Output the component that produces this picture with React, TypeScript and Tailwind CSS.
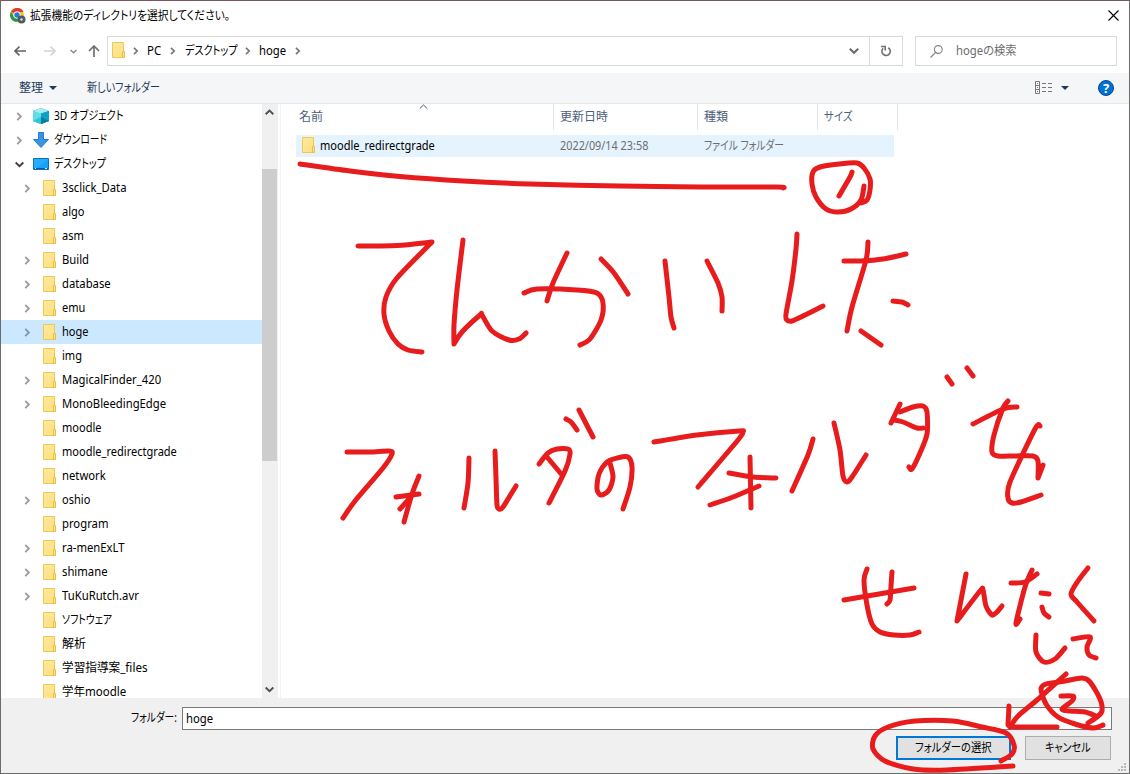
import type { ReactNode } from "react";

type Stroke = number[];

/* Freehand pen strokes as x,y pairs; a repeated point makes a sharp corner. */
const strokes: Stroke[] = [
  [300, 164, 350, 171, 400, 176.5, 463, 181, 530, 184, 620, 186, 700, 187, 777, 187, 783, 188],
  [358, 246, 397, 245.5, 432, 242, 432, 242, 397, 278, 386, 297, 384, 314, 389, 331, 398, 344, 408, 350, 422, 352],
  [463, 240, 457, 290, 454, 325, 454, 344, 454, 344, 462, 332, 480, 315, 482, 315, 492, 331, 509, 340, 519, 339, 526, 333],
  [524, 293, 537, 289, 577, 290, 597, 293, 603, 303, 601, 320, 590, 339, 580, 345],
  [567, 253, 553, 283, 547, 301],
  [601, 259, 614, 273, 628, 294],
  [665, 261, 669, 297, 671, 317, 674, 328],
  [707, 261, 718, 283, 722, 297, 722, 311],
  [797, 234, 796, 249, 792, 281, 786, 314, 787, 320, 792, 321, 801, 317, 823, 306],
  [844, 261, 861, 261, 883, 259, 906, 254],
  [868, 242, 866, 260, 852, 307, 847, 331],
  [893, 301, 902, 302, 908, 305],
  [861, 331, 881, 345],
  [861, 203, 867, 200, 870, 190, 870, 179, 864, 168, 857, 163, 839, 164, 820, 167, 813, 172, 812, 184, 816, 197, 826, 209, 838, 212, 851, 209, 861, 200, 864, 186],
  [852, 172, 850, 177, 839, 196],
  [347, 452, 370, 452, 389, 451, 392, 454, 383, 468, 355, 501, 343, 518],
  [396, 497, 419, 494],
  [419, 476, 412, 494, 404, 522],
  [410, 498, 400, 509],
  [469, 458, 468, 483, 464, 508],
  [495, 451, 496, 478, 497, 505, 499, 509, 503, 507, 516, 486],
  [539, 464, 548, 453, 557, 449, 568, 449, 570, 454, 565, 471, 549, 503],
  [547, 457, 562, 475],
  [566, 419, 571, 422, 577, 430],
  [579, 410, 593, 437],
  [610, 463, 613, 477, 609, 490, 601, 495, 597, 489, 599, 474, 607, 462, 617, 458, 628, 457, 632, 467, 630, 487, 623, 509],
  [654, 442, 697, 435, 739, 431, 743, 432, 738, 440, 698, 487],
  [729, 473, 753, 477, 776, 478],
  [750, 457, 751, 508],
  [759, 486, 733, 497, 710, 505],
  [813, 439, 808, 455, 792, 491],
  [834, 423, 840, 450, 843, 476, 847, 482, 852, 477, 866, 455],
  [900, 404, 891, 423],
  [894, 420, 903, 422, 917, 428, 923, 428],
  [900, 412, 913, 407, 923, 406, 927, 412, 927, 434, 920, 453, 912, 469, 909, 467],
  [947, 377, 952, 384],
  [967, 368, 973, 376],
  [973, 424, 1003, 409, 1017, 407],
  [1008, 401, 1003, 408, 994, 435, 992, 452, 998, 456, 1015, 456, 1033, 456, 1038, 461, 1038, 478, 1038, 478, 1043, 465],
  [1040, 426, 1035, 429, 1010, 482, 1008, 498, 1012, 503, 1021, 502, 1041, 495],
  [844, 600, 914, 588],
  [867, 569, 864, 580, 867, 605, 872, 624, 880, 632, 894, 635, 910, 635, 919, 632],
  [892, 572, 891, 586, 890, 600, 887, 604],
  [966, 574, 957, 621, 957, 621, 980, 591, 983, 590, 986, 606, 992, 615, 997, 612, 1002, 606],
  [1011, 583, 1025, 582, 1037, 574],
  [1032, 570, 1025, 587, 1016, 623, 1020, 619],
  [1041, 593, 1049, 594],
  [1042, 607, 1044, 613, 1049, 617],
  [1088, 568, 1078, 581, 1071, 594, 1077, 602, 1094, 621],
  [1036, 635, 1036, 652, 1044, 662, 1055, 659, 1065, 648],
  [1073, 639, 1090, 637, 1087, 647, 1089, 655, 1096, 658],
  [1066, 674, 1037, 700, 1018, 716, 1010, 727],
  [1009, 706, 1008, 725, 1008, 725, 1015, 727, 1057, 727],
  [1103, 725, 1093, 728, 1075, 724, 1058, 717, 1046, 704, 1041, 689, 1046, 684, 1065, 681, 1082, 678, 1090, 682, 1100, 699, 1102, 711, 1097, 717, 1088, 723],
  [1061, 696, 1073, 696, 1072, 701, 1062, 709, 1070, 711, 1085, 712, 1096, 716],
  [1001, 761, 1012, 754, 1014, 745, 1006, 733, 982, 727, 953, 721, 915, 721, 888, 727, 875, 736, 873, 749, 885, 761, 913, 769, 947, 770, 1013, 766],
];

function smooth(p: Stroke) {
  const n = p.length / 2;
  const at = (i: number) => {
    const k = Math.max(0, Math.min(n - 1, i));
    return [p[k * 2], p[k * 2 + 1]];
  };
  let d = `M${p[0]} ${p[1]}`;
  for (let i = 0; i < n - 1; i++) {
    const [a, b, c, e] = [at(i - 1), at(i), at(i + 1), at(i + 2)];
    if (b[0] === c[0] && b[1] === c[1]) continue;
    d += `C${b[0] + (c[0] - a[0]) / 7} ${b[1] + (c[1] - a[1]) / 7} ${c[0] - (e[0] - b[0]) / 7} ${c[1] - (e[1] - b[1]) / 7} ${c[0]} ${c[1]}`;
  }
  return d;
}

/* Narrow Japanese UI text */
function Jp({ children, scale = "scale-x-[0.84]" }: { children: ReactNode; scale?: string }) {
  return <span className={`inline-block origin-left whitespace-nowrap [font-feature-settings:'palt'] ${scale}`}>{children}</span>;
}

function Folder() {
  return (
    <svg width="14" height="16" viewBox="0 0 14 16" className="shrink-0">
      <defs>
        <linearGradient id="folder" x1="0" y1="0" x2="1" y2="1">
          <stop stopColor="#ffe9a2" />
          <stop offset="1" stopColor="#ffdf7d" />
        </linearGradient>
      </defs>
      <path d="M.5.5h11v15H.5z" fill="url(#folder)" stroke="#ecc94f" />
      <path d="M10.5 9.5h2v6h-2z" fill="#ffe38c" stroke="#e6bf43" />
    </svg>
  );
}

function Chevron({ dir = "right", color = "#8c8c8c", size = 8 }: { dir?: "right" | "down" | "up"; color?: string; size?: number }) {
  const d = { right: "M2 .8 5.2 4 2 7.2", down: "M.6 2.2 4 5.5 7.4 2.2", up: "M.6 5.6 4 2.3 7.4 5.6" }[dir];
  return (
    <svg width={size} height={size} viewBox="0 0 8 8" className="shrink-0" fill="none" stroke={color} strokeWidth="1.7">
      <path d={d} />
    </svg>
  );
}

function Cube() {
  return (
    <svg width="16" height="16" viewBox="0 0 16 16">
      <path d="M0 3 8 0l8 3v10l-8 3-8-3z" fill="#1298b8" />
      <path d="m0 3 8 2v11l-8-3z" fill="#5fdde6" />
      <path d="m0 3 8-3 8 3-8 2.5z" fill="#a5eef2" />
      <path d="m8 5.500 8-2.500v10l-8 3z" fill="#0ba3c4" />
      <path d="m0 13 8-4v7z" fill="#2cc4d5" />
      <path d="m16 13-8-4v7z" fill="#087d9c" />
    </svg>
  );
}

function DownArrow() {
  return (
    <svg width="16" height="16" viewBox="0 0 16 16">
      <path d="M5.500.500h5V7.500h5L8 15.500.5 7.500h5z" fill="#3994e5" stroke="#267ccc" />
    </svg>
  );
}

function Monitor() {
  return (
    <svg width="16" height="12" viewBox="0 0 16 12">
      <path d="M.5.5h15v11H.5z" fill="#17a2fa" stroke="#0873bd" />
      <path d="M1 1h14L3 10.500H1z" fill="#32b1ff" opacity=".7" />
      <path d="M1 10.500h14" stroke="#075a99" />
      <path d="M2 10.500h1m9 0h2" stroke="#d7efff" />
    </svg>
  );
}

type Row = { name: string; open?: boolean; jp?: string };
const rows: Row[] = [
  { name: "3sclick_Data", open: true },
  { name: "algo" },
  { name: "asm" },
  { name: "Build", open: true },
  { name: "database", open: true },
  { name: "emu", open: true },
  { name: "hoge", open: true },
  { name: "img" },
  { name: "MagicalFinder_420", open: true },
  { name: "MonoBleedingEdge", open: true },
  { name: "moodle" },
  { name: "moodle_redirectgrade" },
  { name: "network" },
  { name: "oshio", open: true },
  { name: "program" },
  { name: "ra-menExLT", open: true },
  { name: "shimane", open: true },
  { name: "TuKuRutch.avr", open: true },
  { name: "ソフトウェア", jp: "scale-x-[0.82]" },
  { name: "解析", jp: "scale-x-100" },
  { name: "学習指導案_files", jp: "scale-x-[0.97]" },
  { name: "学年moodle", jp: "scale-x-[0.96]" },
];

const latin = "scale-x-[0.92]";
const latinWide = "scale-x-[0.94]";
const wideNames = ["MagicalFinder_420", "MonoBleedingEdge", "3sclick_Data", "TuKuRutch.avr", "ra-menExLT", "database", "network", "shimane", "program", "Build"];

function RootRow({ icon, label, open, scale }: { icon: ReactNode; label: string; open?: boolean; scale: string }) {
  return (
    <div className="flex h-6 shrink-0 items-center pl-[14px]">
      <Chevron dir={open ? "down" : "right"} color={open ? "#404040" : "#a0a0a0"} size={9} />
      <div className="ml-[9px] flex w-4 justify-center">{icon}</div>
      <div className="ml-[5px]"><Jp scale={scale}>{label}</Jp></div>
    </div>
  );
}

export default function App() {
  return (
    <div className="relative flex h-[774px] w-[1130px] flex-col overflow-hidden border border-[#6b6b6b] border-t-[#79555d] bg-white font-['Noto_Sans','Noto_Sans_CJK_JP',sans-serif] text-[12px] leading-4 text-black">
      <header className="flex h-[29px] shrink-0 items-center pr-[10px] pl-[9px]">
        <svg width="16" height="16" viewBox="0 0 16 16">
          <circle cx="7" cy="7" r="7" fill="#f9c51d" />
          <path d="M7 7 1 3.500A7 7 0 0 1 13.500 4H7z" fill="#e23b2e" />
          <path d="M1 3.500A7 7 0 0 0 7 14l2-4-5-1z" fill="#279847" />
          <circle cx="7" cy="7" r="3.300" fill="#2977df" stroke="#fff" />
          <circle cx="11.500" cy="11.500" r="4" fill="#4c5a65" />
          <circle cx="11.500" cy="11.500" r="1.200" fill="#dfe5e9" />
        </svg>
        <div className="ml-[4px] grow"><Jp scale="scale-x-[0.895]">拡張機能のディレクトリを選択してください。</Jp></div>
        <svg width="11" height="11" viewBox="0 0 11 11" stroke="#000" strokeWidth="1.100"><path d="m.5.500 10 10m0-10-10 10" /></svg>
      </header>

      <div className="flex h-[42px] shrink-0 items-center pl-[13px]">
        <svg width="12" height="10" viewBox="0 0 12 10" fill="none" stroke="#636363" strokeWidth="1.600"><path d="M12 5H1m4.500-4.300L1 5l4.500 4.300" /></svg>
        <svg width="12" height="10" viewBox="0 0 12 10" fill="none" stroke="#d4d4d4" strokeWidth="1.600" className="ml-[18px]"><path d="M0 5h11M6.500.7 11 5 6.500 9.300" /></svg>
        <div className="ml-[14px] flex"><Chevron dir="down" size={7} /></div>
        <svg width="12" height="12" viewBox="0 0 12 12" fill="none" stroke="#707070" strokeWidth="1.700" className="ml-[11px]"><path d="M6 12V1M1 6l5-5 5 5" /></svg>
        <div className="ml-[7px] flex h-[30px] w-[796px] items-center border border-[#d9d9d9] pl-1">
          <div className="mb-[2px] flex"><Folder /></div>
          <div className="ml-[6px] flex"><Chevron color="#777" /></div>
          <div className="ml-[7px] w-[14px]"><Jp scale="scale-x-[0.95]">PC</Jp></div>
          <div className="ml-[8px] flex"><Chevron color="#777" /></div>
          <div className="ml-2 w-[52px]"><Jp>デスクトップ</Jp></div>
          <div className="ml-[7px] flex"><Chevron color="#777" /></div>
          <div className="ml-[7px] w-[27px]"><Jp scale={latinWide}>hoge</Jp></div>
          <div className="ml-[8px] flex grow"><Chevron color="#777" /></div>
          <Chevron dir="down" color="#6c6c6c" size={10} />
          <div className="ml-[10px] flex h-full w-[33px] items-center justify-center border-l border-[#d9d9d9]">
            <svg width="12" height="12" viewBox="0 0 12 12" fill="none" stroke="#707070" strokeWidth="1.600"><path d="M8.300 2.700a4.200 4.200 0 1 1-5.200.6M1 1.500h4.200v4" /></svg>
          </div>
        </div>
        <div className="ml-3 flex h-[30px] w-[202px] items-center border border-[#d9d9d9] pl-[14px]">
          <svg width="13" height="13" viewBox="0 0 13 13" fill="none" stroke="#887f8b" strokeWidth="1.100"><circle cx="8.300" cy="4.500" r="3.900" /><path d="M5.500 7.500.5 12.500" /></svg>
          <div className="ml-[13px] text-[#6d6d6d]"><Jp scale="scale-x-[0.94]">hogeの検索</Jp></div>
        </div>
      </div>

      <div className="mt-px flex h-[31px] shrink-0 items-center border-b border-[#e5e7ea] bg-[#f4f6f8] pl-[18px] text-[#1e395b]">
        <div className="w-6">整理</div>
        <svg width="8" height="4" viewBox="0 0 8 4" className="ml-[6px]"><path d="M0 0h8L4 4z" fill="#1e395b" /></svg>
        <div className="ml-[30px] w-[75px]"><Jp scale="scale-x-[0.84]">新しいフォルダー</Jp></div>
        <svg width="17" height="14" viewBox="0 0 17 14" fill="none" stroke="#777" className="ml-[873px]">
          <path d="M.5.500h4v12h-4zM.5 4.500h4m-4 4h4M7 2.500h4m2 0h4M7 6.500h4m2 0h4M7 10.500h4m2 0h4" />
          <path d="M2 2.500h1m-1 4h1" stroke="#777" /><path d="M2 10.500h1" stroke="#b44" />
        </svg>
        <svg width="8" height="4" viewBox="0 0 8 4" className="ml-[9px]"><path d="M0 0h8L4 4z" fill="#1e395b" /></svg>
        <div className="ml-[29px] flex size-4 items-center justify-center rounded-full border border-[#064b91] bg-[#006fd0] text-[13px] leading-none font-bold text-white">?</div>
      </div>

      <main className="flex h-[594px] shrink-0">
        <div className="flex w-[261px] shrink-0 flex-col overflow-hidden">
          <RootRow icon={<Cube />} label="3D オブジェクト" scale="scale-x-[0.85]" />
          <RootRow icon={<DownArrow />} label="ダウンロード" scale="scale-x-[0.81]" />
          <RootRow icon={<Monitor />} label="デスクトップ" open scale="scale-x-[0.83]" />
          {rows.map((r) => (
            <div key={r.name} className={`flex h-6 shrink-0 items-center pl-[22px] ${r.name === "hoge" ? "bg-[#cce8ff]" : ""}`}>
              <div className="flex w-[9px]">{r.open && <Chevron color={r.name === "hoge" ? "#8399aa" : "#a0a0a0"} size={9} />}</div>
              <div className="ml-[11px] flex"><Folder /></div>
              <div className="ml-[5px]"><Jp scale={r.jp ?? (wideNames.includes(r.name) ? latinWide : latin)}>{r.name}</Jp></div>
            </div>
          ))}
        </div>
        <div className="flex w-4 shrink-0 flex-col items-start bg-[#f0f0f0] pt-1">
          <div className="ml-[3px] flex"><Chevron dir="up" color="#505050" size={9} /></div>
          <div className="mt-[52px] h-[292px] w-[15px] bg-[#cdcdcd]" />
          <div className="mt-auto mb-[4px] ml-[3px] flex"><Chevron dir="down" color="#505050" size={9} /></div>
        </div>
        <div className="ml-[2px] grow border-l border-[#f3f3f3]">
          <div className="flex h-[26px] text-[#4c607a]">
            <div className="flex w-[273px] justify-between border-r border-[#e5e5e5] pl-[18px]">
              <span className="pt-[5px]">名前</span>
              <svg width="9" height="6" viewBox="0 0 9 6" className="mr-[125px]" fill="none" stroke="#555"><path d="M.8 4.500 4.500 1l3.700 3.500" /></svg>
            </div>
            <div className="w-[144px] border-r border-[#e5e5e5] pt-[5px] pl-[6px]">更新日時</div>
            <div className="w-[120px] border-r border-[#e5e5e5] pt-[5px] pl-[6px]">種類</div>
            <div className="w-[80px] border-r border-[#e5e5e5] pt-[5px] pl-[6px]"><Jp scale="scale-x-[0.87]">サイズ</Jp></div>
          </div>
          <div className="mt-[5px] ml-[15px] flex h-[22px] w-[598px] items-center bg-[#e5f3ff] pl-[6px] text-[#6d6d6d]">
            <div className="mb-[2px] flex"><Folder /></div>
            <div className="ml-[4px] w-[240px] text-black"><Jp scale={latin}>moodle_redirectgrade</Jp></div>
            <div className="w-[144px]"><Jp scale="scale-x-[0.905]">2022/09/14 23:58</Jp></div>
            <div><Jp scale="scale-x-[0.815]">ファイル フォルダー</Jp></div>
          </div>
        </div>
      </main>

      <footer className="flex grow flex-col bg-[#f0f0f0]">
        <div className="flex h-[32px] pt-[9px]">
          <div className="ml-[130px] w-[51px] pt-[3px]"><Jp scale="scale-x-[0.81]">フォルダー:</Jp></div>
          <div className="flex h-[23px] w-[930px] items-center border border-[#7a7a7a] bg-white pl-[3px]"><Jp scale={latinWide}>hoge</Jp></div>
        </div>
        <div className="mt-[6px] flex pl-[895px]">
          <div className="flex h-6 w-[115px] items-center border-2 border-[#0078d7] bg-[#e1e1e1] pl-[17px]"><Jp scale="scale-x-[0.86]">フォルダーの選択</Jp></div>
          <div className="ml-[14px] flex h-6 w-[86px] items-center border border-[#adadad] bg-[#e1e1e1] pl-[19px]"><Jp scale="scale-x-[0.84]">キャンセル</Jp></div>
        </div>
      </footer>

      <svg width="8" height="8" viewBox="0 0 8 8" className="absolute right-[3px] bottom-[2px]" fill="#b8b8b8">
        <path d="M6 0h2v2H6zM3 3h2v2H3zm3 0h2v2H6zM0 6h2v2H0zm3 0h2v2H3zm3 0h2v2H6z" />
      </svg>

      <svg width="1130" height="774" viewBox="0 0 1130 774" className="pointer-events-none absolute -top-px -left-px" fill="none" stroke="#e81c1c" strokeWidth="5" strokeLinecap="round" strokeLinejoin="round">
        {strokes.map((s, i) => <path key={i} d={smooth(s)} />)}
      </svg>
    </div>
  );
}
